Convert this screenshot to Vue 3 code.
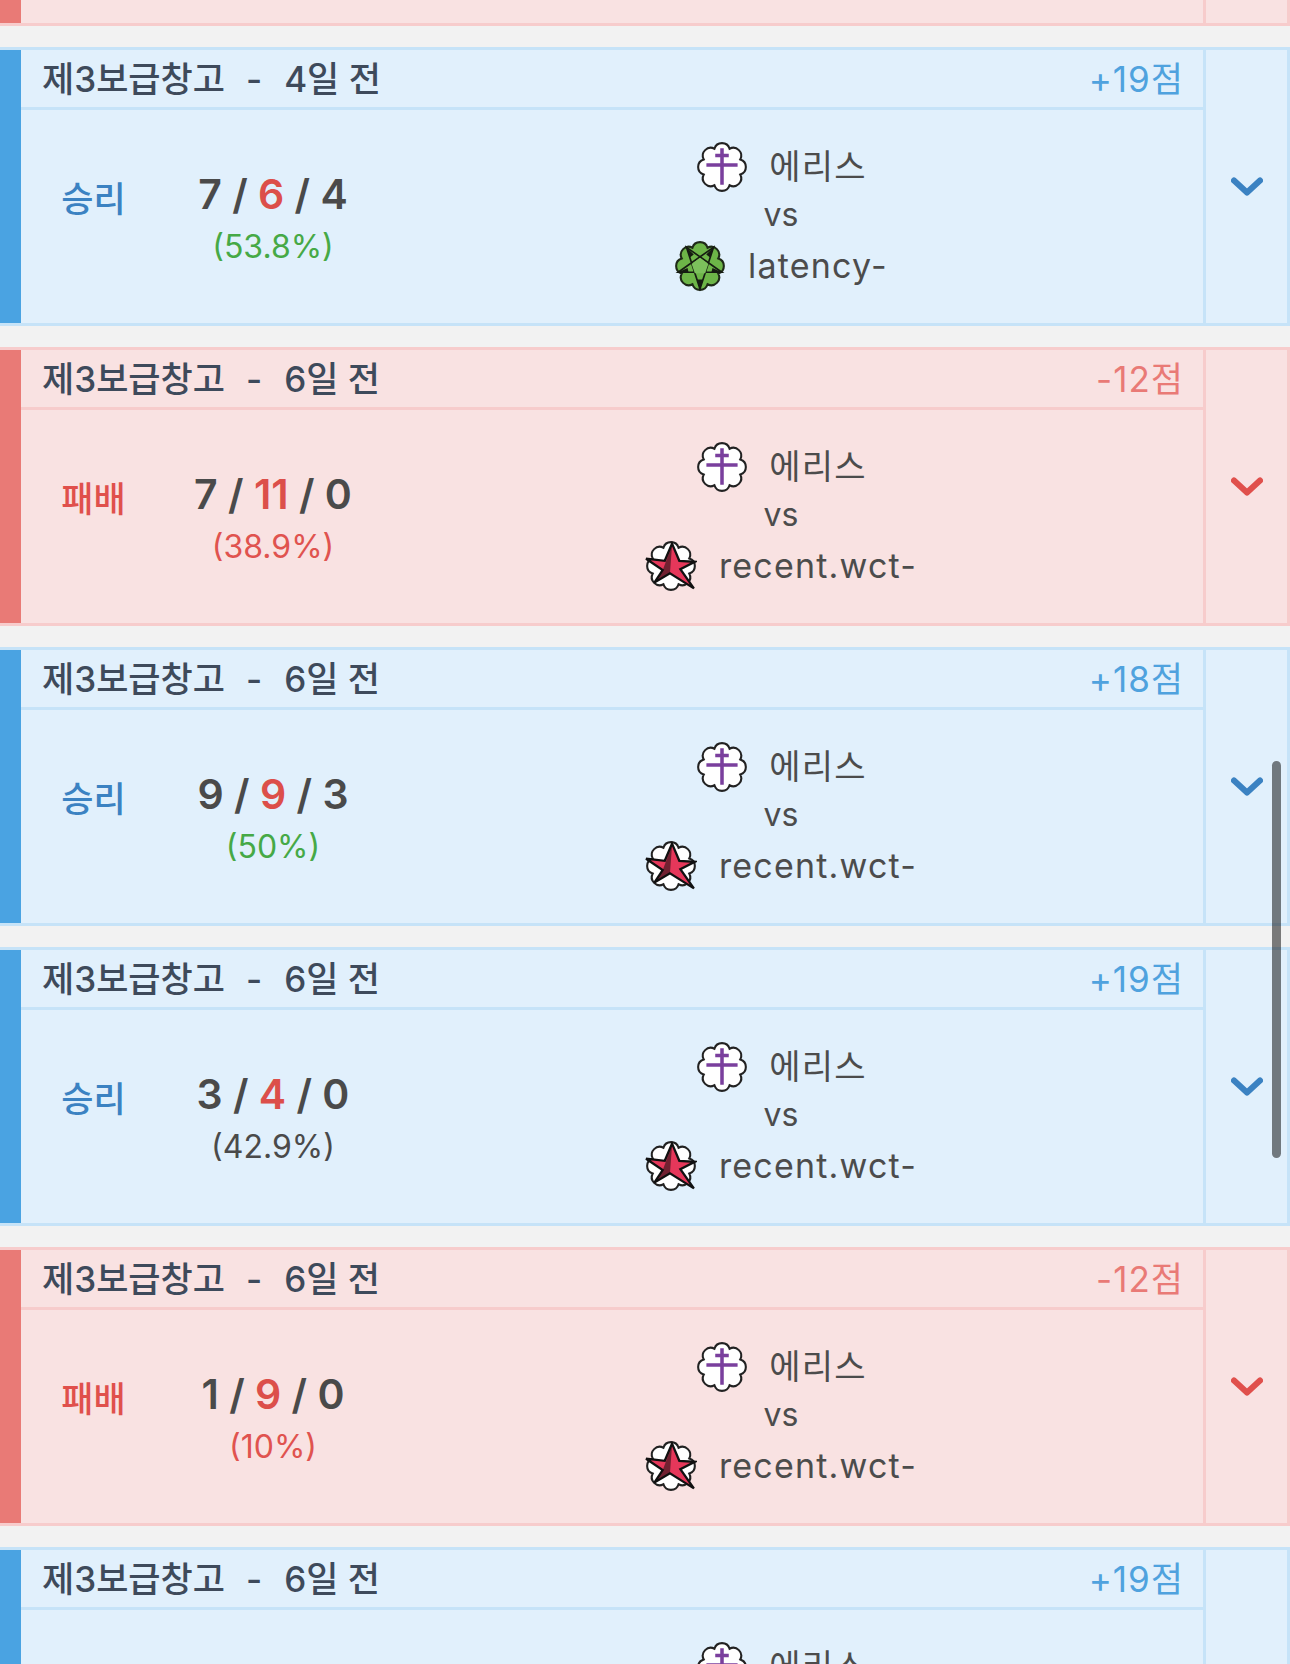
<script setup>
// 전적 목록 - 위아래가 잘린 화면 그대로
const flower = (() => {
  const pts = []
  for (let i = 0; i < 8; i++) {
    const a = ((i * 45 + 22.5) * Math.PI) / 180
    pts.push([(25 + 19 * Math.cos(a)).toFixed(2), (25 + 19 * Math.sin(a)).toFixed(2)])
  }
  return 'M' + pts[0].join(' ') + pts.slice(1).concat([pts[0]]).map(p => ` A7.6 7.6 0 0 1 ${p[0]} ${p[1]}`).join('') + 'Z'
})()

const me = { name: '에리스', icon: 'cross' }
const latency = { name: 'latency-', icon: 'green' }
const wct = { name: 'recent.wct-', icon: 'red' }

const cards = [
  { win: true, ago: '4일 전', score: '+19점', k: 7, d: 6, a: 4, pct: '53.8%', pctClass: 'good', opp: latency },
  { win: false, ago: '6일 전', score: '-12점', k: 7, d: 11, a: 0, pct: '38.9%', pctClass: 'bad', opp: wct },
  { win: true, ago: '6일 전', score: '+18점', k: 9, d: 9, a: 3, pct: '50%', pctClass: 'good', opp: wct },
  { win: true, ago: '6일 전', score: '+19점', k: 3, d: 4, a: 0, pct: '42.9%', pctClass: '', opp: wct },
  { win: false, ago: '6일 전', score: '-12점', k: 1, d: 9, a: 0, pct: '10%', pctClass: 'bad', opp: wct },
  { win: true, ago: '6일 전', score: '+19점', opp: wct }
]
</script>

<template>
  <div class="page">
    <div class="stub">
      <div class="stub-bar"></div>
      <div class="stub-main"></div>
      <div class="stub-side"></div>
    </div>

    <div v-for="(card, idx) in cards" :key="idx" class="card" :class="card.win ? 'win' : 'lose'">
      <div class="bar"></div>
      <div class="main">
        <div class="head">
          <span class="title">제3보급창고<span class="dash">-</span>{{ card.ago }}</span>
          <span class="score">{{ card.score }}</span>
        </div>
        <div class="body">
          <div class="result">{{ card.k !== undefined ? (card.win ? '승리' : '패배') : '' }}</div>
          <div class="kda">
            <template v-if="card.k !== undefined">
              <div class="nums">{{ card.k }} / <span class="deaths">{{ card.d }}</span> / {{ card.a }}</div>
              <div class="pct" :class="card.pctClass">({{ card.pct }})</div>
            </template>
          </div>
          <div class="players">
            <template v-for="(p, i) in [me, card.opp]" :key="i">
              <div v-if="i === 1" class="vs">vs</div>
              <div class="player">
                <svg class="emblem" :class="p.icon" viewBox="0 0 50 50" width="52" height="52">
                  <template v-if="p.icon === 'cross'">
                    <path :d="flower" fill="#fff" stroke="#222" stroke-width="2" />
                    <path d="M25 7V42M18.5 14H31.5M10 23H40" fill="none" stroke="#7a3f9d" stroke-width="3.4" />
                  </template>
                  <template v-else-if="p.icon === 'green'">
                    <path :d="flower" fill="#6db548" stroke="#1f2a18" stroke-width="2" />
                    <path d="M25 47L12 7L46 31H4L38 7Z" fill="none" stroke="#161c12" stroke-width="1.6" />
                    <path d="M12 7L19 14L15 17ZM38 7L35 17L31 14ZM4 31L13 27L14 31ZM46 31L36 31L37 27ZM25 47L22 38H28Z" fill="#161c12" />
                    <path d="M25 17L33 23L30 32H20L17 23Z" fill="#7cc05c" />
                  </template>
                  <template v-else>
                    <path :d="flower" fill="#fff" stroke="#222" stroke-width="2" />
                    <path d="M26 3.5L33 20L48 21L34 28L47 46.5L24 32L9 41L17 29L1 18L19 20Z" fill="#e6375a" stroke="#111" stroke-width="2.2" />
                    <path d="M26 5L24 32L9 41L17 29Z" fill="#111" fill-opacity="0.55" />
                  </template>
                </svg>
                <span class="name">{{ p.name }}</span>
              </div>
            </template>
          </div>
        </div>
      </div>
      <div class="side">
        <svg viewBox="0 0 32 20" width="32" height="20">
          <path d="M3 3.5L16 15.5L29 3.5" fill="none" stroke="currentColor" stroke-width="6" stroke-linecap="round" stroke-linejoin="round" />
        </svg>
      </div>
    </div>

    <div class="scrollbar"></div>
  </div>
</template>

<style>
html, body {
  margin: 0;
  background: #f2f2f2;
}
</style>

<style scoped>
.page {
  position: relative;
  height: 1664px;
  overflow: hidden;
  background: #f2f2f2;
  font-family: Inter, "Noto Sans CJK KR", sans-serif;
  color: #4a4a4a;
}
.stub {
  display: flex;
  height: 26px;
  box-sizing: border-box;
  background: #f9e2e2;
  border-bottom: 3px solid #f7cccc;
  margin-bottom: 21px;
}
.stub-bar {
  width: 21px;
  background: #e97a76;
}
.stub-main {
  flex: 1;
  border-right: 3px solid #f7cccc;
}
.stub-side {
  width: 84px;
  box-sizing: border-box;
  border-right: 3px solid #f7cccc;
}
.card {
  display: flex;
  height: 279px;
  box-sizing: border-box;
  margin-bottom: 21px;
  border-top: 3px solid var(--line);
  border-bottom: 3px solid var(--line);
  background: var(--bg);
}
.win {
  --bg: #e1f0fc;
  --line: #c6e3f8;
  --bar: #4aa3e2;
  --score: #4fa2de;
  --strong: #3b82c2;
}
.lose {
  --bg: #f9e2e2;
  --line: #f7cccc;
  --bar: #e97a76;
  --score: #e97a76;
  --strong: #e0504c;
}
.bar {
  width: 21px;
  background: var(--bar);
}
.main {
  flex: 1;
  display: flex;
  flex-direction: column;
  min-width: 0;
  border-right: 3px solid var(--line);
}
.head {
  display: flex;
  justify-content: space-between;
  align-items: center;
  height: 60px;
  box-sizing: border-box;
  padding: 2px 19px 0 21px;
  border-bottom: 3px solid var(--line);
  font-size: 35px;
  line-height: 55px;
}
.title {
  color: #3e4a5b;
  font-weight: 500;
}
.dash {
  margin: 0 22px 0 21px;
}
.score {
  color: var(--score);
  letter-spacing: 1px;
}
.body {
  flex: 1;
  display: grid;
  grid-template-columns: 144px 216px 1fr;
  align-items: center;
  padding-right: 24px;
}
.result {
  padding: 0 0 34px 1px;
  text-align: center;
  font-size: 35px;
  font-weight: 500;
  line-height: 51px;
  color: var(--strong);
}
.kda {
  padding-top: 7px;
  text-align: center;
}
.nums {
  margin-bottom: 1px;
  font-size: 41px;
  font-weight: 600;
  line-height: 51px;
}
.deaths {
  color: #dc4f4a;
}
.pct {
  font-size: 32px;
  line-height: 51px;
}
.good {
  color: #46a946;
}
.bad {
  color: #e0534f;
}
.players {
  display: flex;
  flex-direction: column;
  align-items: center;
  padding: 0 0 3px 2px;
}
.player {
  display: flex;
  align-items: center;
  gap: 22px;
  height: 51px;
}
.emblem {
  flex: none;
}
.emblem.cross {
  margin: 5px -1px 0 1px;
}
.name {
  font-size: 34px;
  letter-spacing: 1.2px;
  color: #4c4c4c;
}
.vs {
  font-size: 32px;
  line-height: 50px;
  color: #4c4c4c;
}
.side {
  width: 84px;
  display: flex;
  justify-content: center;
  align-items: flex-start;
  padding-top: 127px;
  box-sizing: border-box;
  border-right: 3px solid var(--line);
  color: var(--strong);
}
.scrollbar {
  position: absolute;
  left: 1272px;
  top: 761px;
  width: 9px;
  height: 397px;
  border-radius: 5px;
  background: rgba(0, 0, 0, 0.5);
}
</style>
